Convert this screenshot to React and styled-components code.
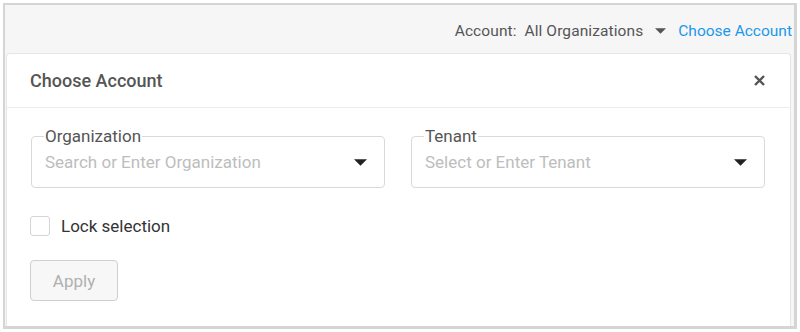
import styled, { createGlobalStyle } from "styled-components";

const GlobalStyle = createGlobalStyle`
  body {
    margin: 0;
    background: #ffffff;
    font-family: Roboto, "Liberation Sans", sans-serif;
  }
`;

const Frame = styled.div`
  margin: 3px;
  height: 321px;
  border-style: solid;
  border-color: #d5d5d5;
  border-width: 2px 3px 3px 2px;
  background: #f6f6f6;
  display: flex;
  flex-direction: column;
`;

const TopBar = styled.div`
  height: 48px;
  box-sizing: border-box;
  padding: 3px 2px 0 0;
  display: flex;
  align-items: center;
  justify-content: flex-end;
  font-size: 15.5px;
  color: #555;
  gap: 12px;
`;

const AccountLabel = styled.span`
  display: flex;
  align-items: center;
  gap: 12px;
  letter-spacing: 0.1px;
`;

const ChooseLink = styled.a`
  color: #1a98ee;
  text-decoration: none;
  cursor: pointer;
`;

const Caret = ({ w, h, color }) => (
  <svg width={w} height={h} viewBox="0 0 10 5">
    <path d="M0 0 L10 0 L5 5 Z" fill={color} />
  </svg>
);

const Panel = styled.div`
  flex: 1;
  margin: 0 3px 0 1px;
  background: #fff;
  border: 1px solid #e6e6e6;
  border-bottom: none;
  border-radius: 4px 4px 0 0;
  display: flex;
  flex-direction: column;
`;

const PanelHeader = styled.div`
  height: 53px;
  border-bottom: 1px solid #ececec;
  display: flex;
  align-items: center;
  justify-content: space-between;
  padding: 0 25px 0 23px;
`;

const Title = styled.h2`
  margin: 0;
  font-size: 18px;
  font-weight: 500;
  color: #555;
`;

const CloseButton = styled.button`
  border: none;
  background: none;
  padding: 0;
  display: flex;
  cursor: pointer;
`;

const Body = styled.div`
  padding: 20px 24px 0 24px;
  display: flex;
  flex-direction: column;
  font-size: 17px;
`;

const Fields = styled.div`
  display: flex;
  gap: 26px;
`;

const Field = styled.fieldset`
  margin: 0;
  width: 354px;
  height: 60px;
  box-sizing: border-box;
  border: 1px solid #d9d9d9;
  border-radius: 4px;
  padding: 0 17px 7px 13px;
  display: flex;
  align-items: center;
  justify-content: space-between;
  legend {
    padding: 0 1px;
    margin-left: -1px;
    font-size: 17px;
    color: #555;
    line-height: 16px;
  }
`;

const Placeholder = styled.span`
  color: #bdbdbd;
`;

const CheckRow = styled.label`
  display: flex;
  align-items: center;
  gap: 11px;
  margin: 28px 0 0 -1px;
  color: #333;
`;

const Box = styled.span`
  width: 20px;
  height: 20px;
  box-sizing: border-box;
  border: 1px solid #d4d4d4;
  border-radius: 3px;
  background: #fff;
`;

const ApplyButton = styled.button`
  margin: 24px 0 0 -1px;
  width: 88px;
  height: 41px;
  border: 1px solid #cfcfcf;
  border-radius: 4px;
  background: #f7f7f7;
  color: #b0b0b0;
  font-family: inherit;
  font-size: 17px;
`;

export default function App() {
  return (
    <>
      <GlobalStyle />
      <Frame>
        <TopBar>
          <AccountLabel>
            <span>Account:&nbsp; All Organizations</span>
            <Caret w={11} h={6} color="#555" />
          </AccountLabel>
          <ChooseLink>Choose Account</ChooseLink>
        </TopBar>
        <Panel>
          <PanelHeader>
            <Title>Choose Account</Title>
            <CloseButton aria-label="Close">
              <svg width="11" height="11" viewBox="0 0 11 11">
                <path d="M1 1 L10 10 M10 1 L1 10" stroke="#555" strokeWidth="2.4" />
              </svg>
            </CloseButton>
          </PanelHeader>
          <Body>
            <Fields>
              <Field>
                <legend>Organization</legend>
                <Placeholder>Search or Enter Organization</Placeholder>
                <Caret w={13} h={7} color="#222" />
              </Field>
              <Field>
                <legend>Tenant</legend>
                <Placeholder>Select or Enter Tenant</Placeholder>
                <Caret w={13} h={7} color="#222" />
              </Field>
            </Fields>
            <CheckRow>
              <Box />
              Lock selection
            </CheckRow>
            <div>
              <ApplyButton disabled>Apply</ApplyButton>
            </div>
          </Body>
        </Panel>
      </Frame>
    </>
  );
}
